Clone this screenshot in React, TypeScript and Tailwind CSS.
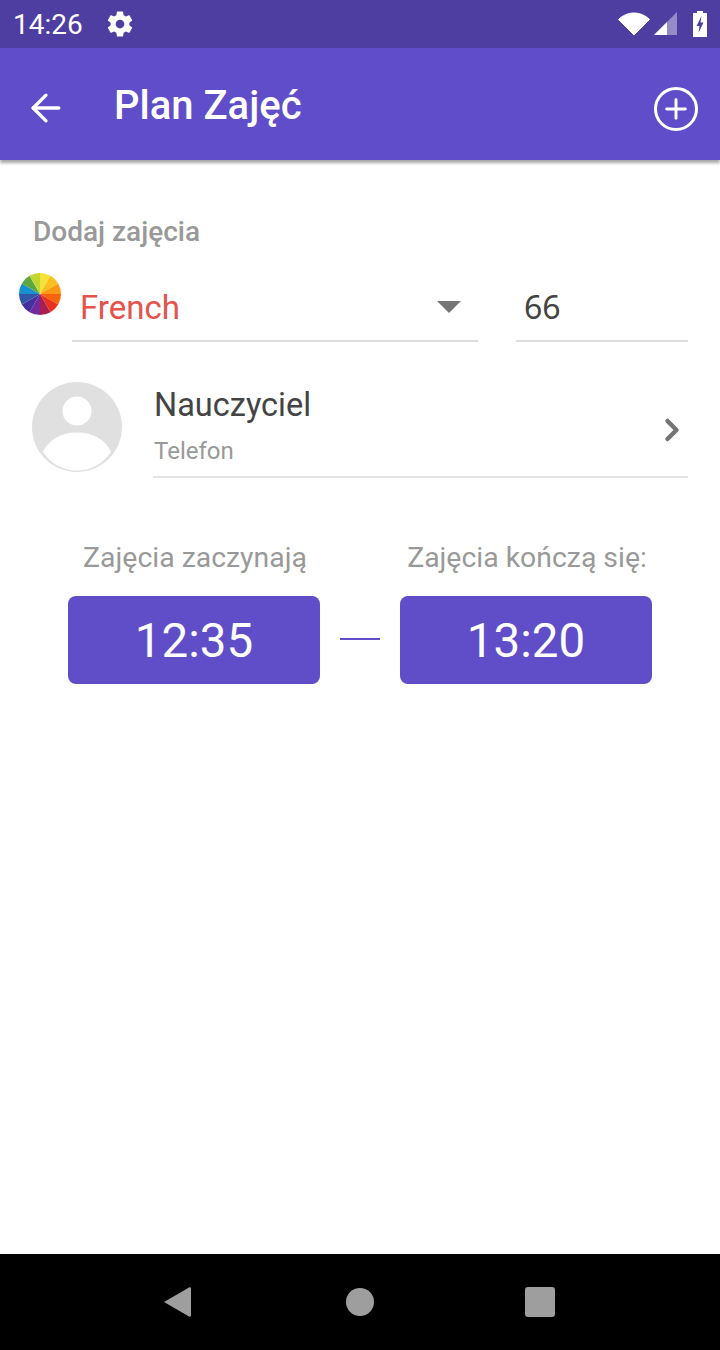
import React from "react";
import { ArrowLeft, ChevronRight, Plus } from "lucide-react";

const WHEEL_COLORS = [
  "#f5e236",
  "#fbbf1d",
  "#fa9a12",
  "#f6640f",
  "#e8321f",
  "#a91d4f",
  "#732a9c",
  "#43309e",
  "#3355a8",
  "#1790cf",
  "#5ca83c",
  "#c2d631",
];

const wedgePath = (index: number) => {
  const step = (Math.PI * 2) / WHEEL_COLORS.length;
  const start = index * step - Math.PI / 2;
  const end = start + step;
  const x1 = 21 + 21 * Math.cos(start);
  const y1 = 21 + 21 * Math.sin(start);
  const x2 = 21 + 21 * Math.cos(end);
  const y2 = 21 + 21 * Math.sin(end);
  return `M21 21L${x1} ${y1}A21 21 0 0 1 ${x2} ${y2}Z`;
};

const ColorWheel = () => (
  <svg width="42" height="42" viewBox="0 0 42 42" className="shrink-0">
    {WHEEL_COLORS.map((color, i) => (
      <path key={color} d={wedgePath(i)} fill={color} />
    ))}
  </svg>
);

const Avatar = () => (
  <svg width="90" height="90" viewBox="0 0 90 90" className="shrink-0">
    <circle cx="45" cy="45" r="45" fill="#e0e0e0" />
    <circle cx="45" cy="29" r="14.5" fill="#fff" />
    <path d="M11 70C16 58 29 50.500 45 50.500C61 50.500 74 58 79 70C71 82 59 88.500 45 88.500C31 88.500 19 82 11 70Z" fill="#fff" />
  </svg>
);

const TimeColumn = ({ label, time }: { label: string; time: string }) => (
  <div className="flex w-[252px] flex-col items-center">
    <div className="h-[55px] whitespace-nowrap pl-[2px] text-[28.400px] leading-[34px] text-[#999999]">
      {label}
    </div>
    <div className="flex h-[88px] w-full items-center justify-center rounded-lg bg-[#604ec9] pt-[4px] text-[47.500px] leading-none text-white">
      {time}
    </div>
  </div>
);

export default function App() {
  return (
    <div className="flex h-[1350px] w-[720px] flex-col overflow-hidden bg-white font-['Roboto',sans-serif]">
      {/* status bar */}
      <div className="flex h-12 shrink-0 items-center bg-[#4f3ea1] pl-[13px] pr-[13px] text-white">
        <span className="pt-[2px] text-[28px] leading-none">14:26</span>
        <svg width="30" height="30" viewBox="0 0 24 24" fill="#fff" className="ml-[22px]">
          <path d="M19.430 12.980c.040-.320.070-.640.070-.980s-.030-.660-.070-.980l2.110-1.650c.190-.150.240-.420.120-.640l-2-3.460c-.120-.220-.390-.300-.610-.220l-2.490 1c-.520-.400-1.080-.730-1.690-.980l-.380-2.650C14.460 2.180 14.250 2 14 2h-4c-.250 0-.460.180-.490.420l-.380 2.650c-.610.250-1.170.590-1.690.980l-2.490-1c-.230-.090-.490 0-.610.220l-2 3.460c-.130.220-.070.490.120.640l2.110 1.650c-.040.320-.070.650-.070.980s.030.660.070.980l-2.110 1.650c-.190.150-.240.420-.120.640l2 3.460c.120.220.390.300.610.220l2.490-1c.520.400 1.080.730 1.690.980l.380 2.650c.030.240.240.420.490.420h4c.250 0 .460-.180.490-.420l.380-2.650c.610-.250 1.170-.590 1.690-.980l2.490 1c.230.090.490 0 .610-.220l2-3.460c.120-.220.070-.490-.120-.640l-2.110-1.650zM12 15.500c-1.930 0-3.500-1.570-3.500-3.500s1.570-3.500 3.500-3.500 3.500 1.570 3.500 3.500-1.570 3.500-3.500 3.500z" />
        </svg>
        <div className="ml-auto flex items-center">
          <svg width="32" height="26" viewBox="0 0 32 26">
            <path d="M0.500 8.500C4.500 4.500 10 2 16 2S27.500 4.500 31.500 8.500L16 24Z" fill="#fff" stroke="#fff" strokeWidth="1" strokeLinejoin="round" />
          </svg>
          <svg width="24" height="24" viewBox="0 0 24 24" className="ml-[4px]">
            <path d="M0 23L23 0V23Z" fill="#fff" fillOpacity="0.4" />
            <path d="M0 23L13 10V23Z" fill="#fff" />
          </svg>
          <svg width="14" height="26" viewBox="0 0 14 26" className="ml-[15px]">
            <path d="M4 0H10V2H14V26H0V2H4Z" fill="#fff" />
            <path d="M8.500 5L3.500 15H6.500L5.500 22L10.500 11.500H7.500Z" fill="#4f3ea1" />
          </svg>
        </div>
      </div>

      {/* app bar */}
      <div className="z-10 flex h-[112px] shrink-0 items-center bg-[#604dc9] pl-[24px] pr-[22px] text-white shadow-[0_3px_3px_rgba(0,0,0,0.35)]">
        <ArrowLeft size={44} strokeWidth={1.8} className="mt-2 shrink-0" />
        <h1 className="ml-[46px] mt-[3px] text-[40px] font-medium leading-none">Plan Zajęć</h1>
        <div className="ml-auto mt-[10px] flex h-11 w-11 items-center justify-center rounded-full border-[3.500px] border-white">
          <Plus size={32} strokeWidth={2.2} />
        </div>
      </div>

      {/* form */}
      <main className="flex flex-1 flex-col">
        <div className="ml-[33px] mt-[54px] text-[28px] font-medium leading-9 text-[#999999]">
          Dodaj zajęcia
        </div>

        <div className="ml-[19px] mr-[32px] flex">
          <div className="mt-[23px]">
            <ColorWheel />
          </div>
          <div className="ml-[11px] mt-[40px] flex h-[52px] w-[406px] items-center border-b-2 border-[#dedede] pl-2 pr-[17px] pb-[16px]">
            <span className="text-[33px] leading-none text-[#e5534b]">French</span>
            <div className="ml-auto h-0 w-0 border-x-[12px] border-t-[12px] border-x-transparent border-t-[#757575]" />
          </div>
          <div className="ml-[38px] mt-[40px] flex h-[52px] w-[172px] items-center border-b-2 border-[#dedede] pl-2 pb-[16px] font-['Noto_Sans',sans-serif] text-[32px] leading-none text-[#444444]">
            66
          </div>
        </div>

        <div className="ml-[32px] mr-[32px] mt-[40px] flex">
          <Avatar />
          <div className="ml-[31px] flex h-[96px] flex-1 items-center border-b-2 border-[#e4e4e4]">
            <div className="flex flex-1 flex-col pb-[10px] pl-[1px]">
              <span className="text-[32.500px] leading-[44px] text-[#444444]">Nauczyciel</span>
              <span className="mt-[9px] text-[24px] leading-[30px] text-[#999999]">Telefon</span>
            </div>
            <ChevronRight size={36} strokeWidth={3} className="mr-[-2px] mt-[2px] text-[#757575]" />
          </div>
        </div>

        <div className="ml-[68px] mt-[63px] flex items-start">
          <TimeColumn label="Zajęcia zaczynają" time="12:35" />
          <div className="mx-5 mt-[97px] h-[2px] w-10 bg-[#604ec9]" />
          <TimeColumn label="Zajęcia kończą się:" time="13:20" />
        </div>
      </main>

      {/* nav bar */}
      <div className="relative flex h-24 shrink-0 items-center justify-center gap-[151px] bg-black">
        <svg width="30" height="34" viewBox="0 0 30 34" className="-translate-x-[3px]">
          <path d="M2 17L27 2.500C28 2 29 2.500 29 3.500V30.500C29 31.500 28 32 27 31.500Z" fill="#9e9e9e" />
        </svg>
        <div className="h-7 w-7 rounded-full bg-[#9e9e9e]" />
        <div className="h-[30px] w-[30px] rounded-[3px] bg-[#9e9e9e]" />
      </div>
    </div>
  );
}
